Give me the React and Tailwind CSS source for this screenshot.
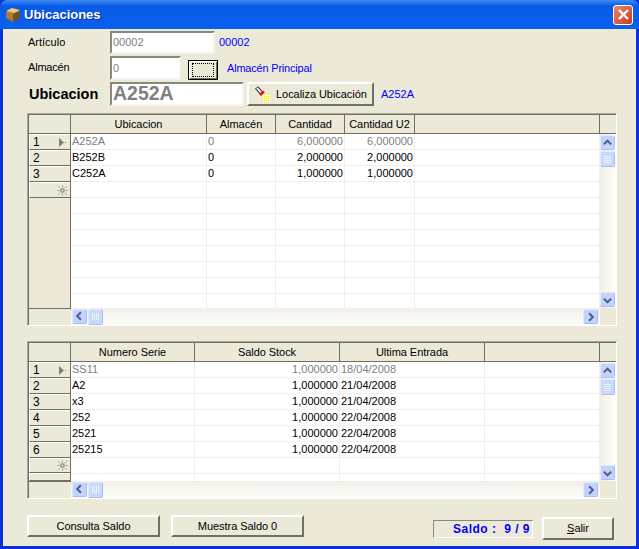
import React from 'react';

const FONT = "font-['Liberation_Sans',Arial,sans-serif]";

// raised push button, used all over the form
function Btn({ className = '', children }) {
  return (
    <button
      type="button"
      className={`flex items-center justify-center bg-[#ece9d8] border-2 border-t-white border-l-white border-r-[#716f64] border-b-[#716f64] text-[11px] tracking-[-0.05px] text-black ${className}`}
    >
      {children}
    </button>
  );
}

function Field({ className = '', textClass = 'text-[11px] pl-[1px]', children }) {
  return (
    <div
      className={`flex items-center bg-white border-2 border-t-[#8a887c] border-l-[#8a887c] border-r-[#f6f4ea] border-b-[#f6f4ea] text-[#808080] ${textClass} ${className}`}
    >
      {children}
    </div>
  );
}

function Arrow({ dir }) {
  const pts = {
    up: 'M3 8.5 L7 4.5 L11 8.5',
    down: 'M3 5.5 L7 9.5 L11 5.5',
    left: 'M8.5 3 L4.5 7 L8.5 11',
    right: 'M5.5 3 L9.5 7 L5.5 11',
  };
  return (
    <svg width="14" height="14" viewBox="0 0 14 14">
      <path d={pts[dir]} fill="none" stroke="#4d6185" strokeWidth="2.2" />
    </svg>
  );
}

function ScrollBtn({ dir }) {
  return (
    <div className="w-[15px] h-[15px] flex items-center justify-center rounded-[2px] bg-[#c3d3fd] border border-[#dfe8fd] border-b-[#a9bdf0] border-r-[#a9bdf0]">
      <Arrow dir={dir} />
    </div>
  );
}

function Thumb({ vertical }) {
  const lines = [0, 1, 2, 3];
  return (
    <div className="w-[15px] h-[16px] flex items-center justify-center rounded-[2px] bg-[#c9d8fd] border border-[#dfe8fd] border-b-[#a9bdf0] border-r-[#a9bdf0]">
      <div className={vertical ? 'flex flex-col gap-[1px]' : 'flex gap-[1px]'}>
        {lines.map((i) => (
          <div key={i} className={vertical ? 'w-[7px] h-[1px] bg-[#eef2fe]' : 'w-[1px] h-[7px] bg-[#eef2fe]'} />
        ))}
      </div>
    </div>
  );
}

function RowPointer() {
  return (
    <svg width="8" height="9" viewBox="0 0 8 9" className="mr-[3px]">
      <path d="M0 0 L5 4.5 L0 9 Z" fill="#808080" />
      <rect x="6" y="4" width="1" height="1" fill="#808080" />
    </svg>
  );
}

function NewRowIcon() {
  return (
    <svg width="11" height="11" viewBox="0 0 11 11" className="mr-[2px]">
      <rect x="4" y="4" width="3" height="3" fill="none" stroke="#777" />
      <path d="M5.5 0V2.5M5.5 8.5V11M0 5.5H2.5M8.5 5.5H11M1 1L3 3M8 8L10 10M10 1L8 3M3 8L1 10" stroke="#a8a698" />
    </svg>
  );
}

function FlashlightIcon() {
  const cells = [];
  for (let y = 0; y < 4; y++) {
    for (let x = 0; x < 4; x++) {
      if (y === 0 && x === 0) continue;
      cells.push(<rect key={`${x}-${y}`} x={7 + x * 2} y={8 + y * 2} width="1.4" height="1.4" fill="#fff200" />);
    }
  }
  return (
    <svg width="16" height="16" viewBox="0 0 16 16">
      <path d="M7 8 L15 8 L15 16 L7 16 Z" fill="#fff" />
      {cells}
      <path d="M1.5 1.5 L6.5 7" stroke="#222" strokeWidth="4" />
      <path d="M1.8 1.8 L6 6.4" stroke="#fff" strokeWidth="2" />
      <path d="M5 9 L9 5.5" stroke="#d81818" strokeWidth="2.6" />
    </svg>
  );
}

function BoxIcon() {
  return (
    <svg width="15" height="15" viewBox="0 0 15 15">
      <path d="M0 5 L7 2 L14 4 L14 11 L7 15 L0 11 Z" fill="#a87c36" />
      <path d="M0 4 L6 1 L14 3 L8 6 Z" fill="#e8cb72" />
      <path d="M7 7 L14 4 L14 11 L7 15 Z" fill="#6e5222" />
    </svg>
  );
}

function IndCell({ children, height = 'h-[16px]', className = '' }) {
  return (
    <div
      className={`${height} w-[41px] flex items-center justify-between bg-[#ece9d8] border-t border-l border-t-white border-l-white border-b border-b-[#716f64] pl-[3px] text-[12px] text-black ${className}`}
    >
      {children}
    </div>
  );
}

// one data grid: header, record selector column, rows and both scrollbars
function DataGrid({ columns, rows, rowCount, partial, bodyHeight, marginClass = '' }) {
  return (
    <div className={`w-[590px] border border-[#aca899] border-r-white border-b-white ${marginClass}`}>
      <div className="border border-[#716f64] border-r-0 border-b-0 bg-[#ece9d8]">
        <div className="flex h-[19px] border-b border-[#716f64]">
          <div className="w-[42px] shrink-0 border-r border-[#716f64]" />
          {columns.map((c) => (
            <div
              key={c.title + c.w}
              style={{ width: c.w }}
              className="shrink-0 flex items-center justify-center pt-[1px] border-r border-[#716f64] text-[11px] tracking-[-0.05px] text-black"
            >
              {c.title}
            </div>
          ))}
          <div className="flex-1" />
        </div>

        <div className="flex" style={{ height: bodyHeight }}>
          <div className="w-[42px] shrink-0 flex flex-col border-r border-[#716f64]">
            {rows.map((r, i) => (
              <IndCell key={i}>
                <span>{i + 1}</span>
                {i === 0 && <RowPointer />}
              </IndCell>
            ))}
            <IndCell>
              <span className="flex-1" />
              <NewRowIcon />
            </IndCell>
            {partial && <IndCell height={partial} />}
          </div>

          <div className="flex-1 overflow-hidden bg-white">
            {Array.from({ length: rowCount }).map((_, i) => {
              const r = rows[i];
              return (
                <div
                  key={i}
                  className={`flex h-[16px] border-b border-[#f1efe2] text-[11px] leading-[15px] ${i === 0 ? 'text-[#808080]' : 'text-black'}`}
                >
                  {columns.map((c, j) => (
                    <div
                      key={j}
                      style={{ width: c.w }}
                      className={`shrink-0 border-r border-[#f1efe2] px-[1px] overflow-hidden whitespace-nowrap ${c.right ? 'text-right' : 'text-left'}`}
                    >
                      {r ? r[j] : ''}
                    </div>
                  ))}
                </div>
              );
            })}
          </div>

          <div className="w-[16px] shrink-0 flex flex-col justify-between py-[1px] bg-gradient-to-r from-[#f1efe6] to-[#fdfdfb]">
            <div className="flex flex-col gap-[1px]">
              <ScrollBtn dir="up" />
              <Thumb vertical />
            </div>
            <ScrollBtn dir="down" />
          </div>
        </div>

        <div className="flex h-[17px]">
          <div className="w-[42px] shrink-0 border-t border-[#716f64]" />
          <div className="flex-1 flex items-center justify-between pl-[1px] pr-[2px] bg-gradient-to-b from-[#f1efe6] to-[#fdfdfb]">
            <div className="flex gap-[1px]">
              <ScrollBtn dir="left" />
              <Thumb />
            </div>
            <ScrollBtn dir="right" />
          </div>
          <div className="w-[16px] shrink-0" />
        </div>
      </div>
    </div>
  );
}

const topColumns = [
  { title: 'Ubicacion', w: 136 },
  { title: 'Almacén', w: 69 },
  { title: 'Cantidad', w: 69, right: true },
  { title: 'Cantidad U2', w: 70, right: true },
  { title: '', w: 185 },
];

const topRows = [
  ['A252A', '0', '6,000000', '6,000000', ''],
  ['B252B', '0', '2,000000', '2,000000', ''],
  ['C252A', '0', '1,000000', '1,000000', ''],
];

const bottomColumns = [
  { title: 'Numero Serie', w: 124 },
  { title: 'Saldo Stock', w: 145, right: true },
  { title: 'Ultima Entrada', w: 145 },
  { title: '', w: 115 },
];

const bottomRows = [
  ['SS11', '1,000000', '18/04/2008', ''],
  ['A2', '1,000000', '21/04/2008', ''],
  ['x3', '1,000000', '21/04/2008', ''],
  ['252', '1,000000', '22/04/2008', ''],
  ['2521', '1,000000', '22/04/2008', ''],
  ['25215', '1,000000', '22/04/2008', ''],
];

export default function App() {
  return (
    <div className={`w-[639px] h-[549px] flex flex-col bg-[#0831d9] ${FONT}`}>
      {/* title bar */}
      <div className="h-[29px] shrink-0 flex items-center rounded-t-[7px] pl-[6px] pr-[6px] bg-gradient-to-b from-[#3f8cf3] via-[#0a5be6] via-20% to-[#0a5fef]">
        <BoxIcon />
        <span className="ml-[3px] text-[13px] font-bold text-white [text-shadow:1px_1px_0_#0a2fa0]">Ubicaciones</span>
        <div className="ml-auto w-[20px] h-[20px] flex items-center justify-center rounded-[3px] border border-white bg-gradient-to-br from-[#e8876a] to-[#c6391a]">
          <svg width="13" height="13" viewBox="0 0 13 13">
            <path d="M2 2 L11 11 M11 2 L2 11" stroke="#fff" strokeWidth="2.4" />
          </svg>
        </div>
      </div>

      {/* client area */}
      <div className="flex-1 mx-[3px] mb-[3px] bg-[#ece9d8] pl-[24px] pt-[2px] text-[11px] text-black">
        <div className="flex items-center h-[23px]">
          <span className="w-[83px] pl-[1px]">Artículo</span>
          <Field className="w-[105px] h-[23px]">00002</Field>
          <span className="ml-[4px] text-[#0000ff]">00002</span>
        </div>

        <div className="flex items-center h-[24px] mt-[2px]">
          <span className="w-[83px] pl-[1px] pb-[2px] tracking-[-0.2px]">Almacén</span>
          <Field className="w-[71px] h-[24px]">0</Field>
          <div className="ml-[7px] w-[30px] h-[20px] mt-[4px] border border-black bg-[#ece9d8] flex items-center justify-center shadow-[inset_1px_1px_0_#fff,inset_-1px_-1px_0_#716f64]">
            <div className="w-[22px] h-[14px] border border-dotted border-black" />
          </div>
          <span className="ml-[9px] tracking-[-0.2px] text-[#0000ff]">Almacén Principal</span>
        </div>

        <div className="flex items-center h-[24px] mt-[2px]">
          <span className="w-[83px] pl-[2px] text-[14.5px] font-bold leading-none">Ubicacion</span>
          <Field className="w-[134px] h-[24px]" textClass="text-[19.5px] font-bold pl-[1px]">A252A</Field>
          <Btn className="ml-[3px] w-[127px] h-[24px] gap-[5px] !justify-start pl-[6px]">
            <FlashlightIcon />
            <span>Localiza Ubicación</span>
          </Btn>
          <span className="ml-[7px] text-[#0000ff]">A252A</span>
        </div>

        <DataGrid
          columns={topColumns}
          rows={topRows}
          rowCount={11}
          bodyHeight={174}
          marginClass="mt-[7px]"
        />

        <DataGrid
          columns={bottomColumns}
          rows={bottomRows}
          rowCount={8}
          partial="h-[8px]"
          bodyHeight={119}
          marginClass="mt-[15px]"
        />

        <div className="flex items-start mt-[16px]">
          <Btn className="w-[133px] h-[22px]">Consulta Saldo</Btn>
          <Btn className="ml-[11px] w-[133px] h-[22px]">Muestra Saldo 0</Btn>
          <div className="ml-[129px] mt-[5px] w-[100px] h-[18px] flex items-center justify-end pr-[2px] border border-t-[#8a887c] border-l-[#8a887c] border-r-white border-b-white text-[12px] font-bold tracking-[0.5px] text-[#0000ff] whitespace-pre">
            Saldo :  9 / 9
          </div>
          <Btn className="ml-[9px] mt-[2px] w-[72px] h-[23px]">
            <span><span className="underline">S</span>alir</span>
          </Btn>
        </div>
      </div>
    </div>
  );
}
